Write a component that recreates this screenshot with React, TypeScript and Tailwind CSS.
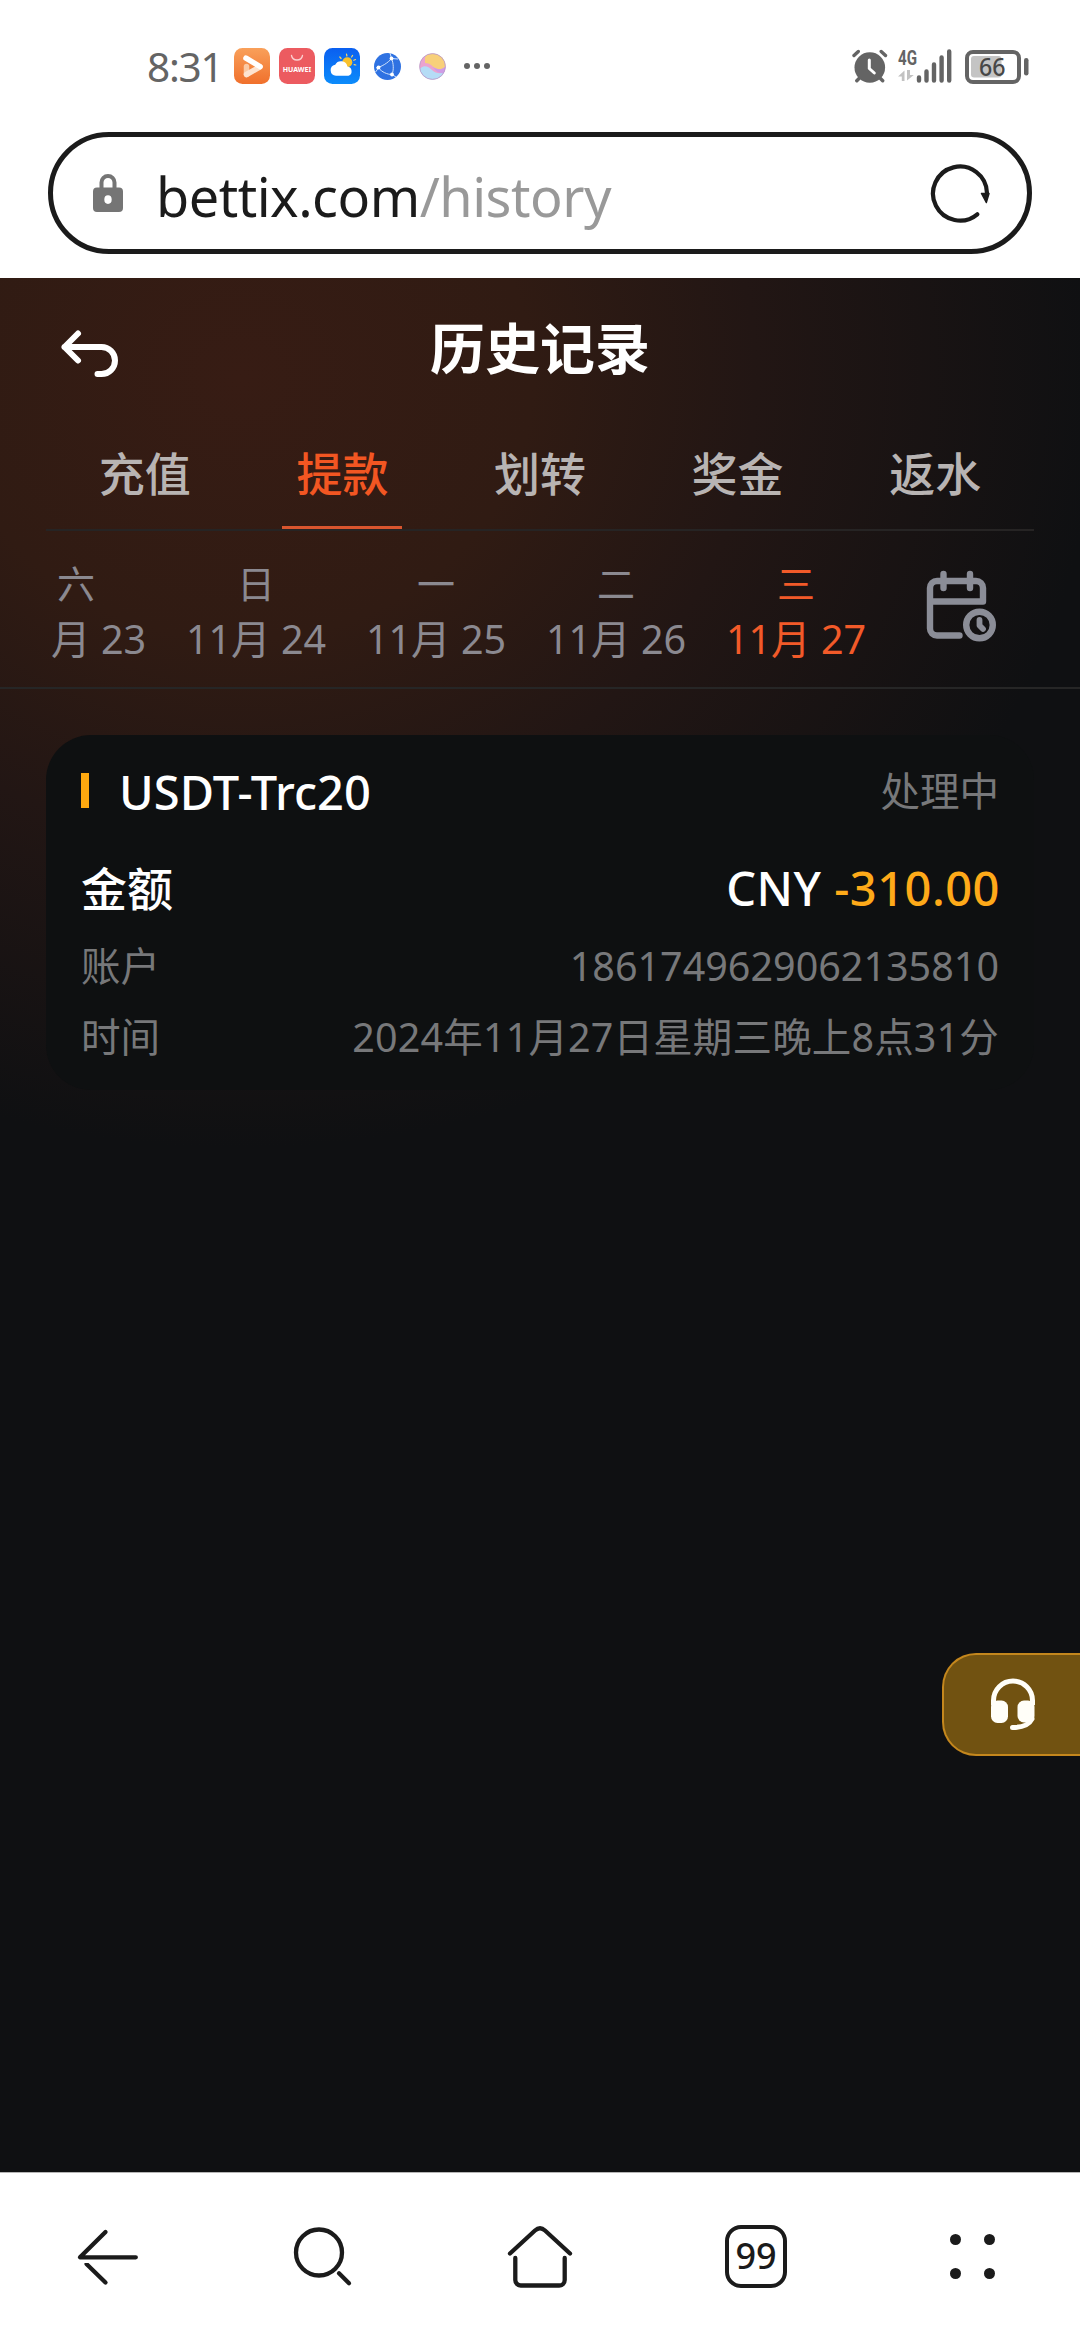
/**
 * Bettix history page - withdrawal records inside the mobile browser
 */

import React from 'react';
import { clsx } from 'clsx';

// ============================================
// Types
// ============================================
interface DayItem {
  weekday: string;
  date: string;
}

interface RecordItem {
  method: string;
  status: string;
  currency: string;
  amount: string;
  account: string;
  time: string;
}

// ============================================
// Data
// ============================================
const tabs = ['充值', '提款', '划转', '奖金', '返水'];
const activeTab = '提款';

const days: DayItem[] = [
  { weekday: '六', date: '11月 23' },
  { weekday: '日', date: '11月 24' },
  { weekday: '一', date: '11月 25' },
  { weekday: '二', date: '11月 26' },
  { weekday: '三', date: '11月 27' },
];
const activeDate = '11月 27';

const record: RecordItem = {
  method: 'USDT-Trc20',
  status: '处理中',
  currency: 'CNY',
  amount: '-310.00',
  account: '1861749629062135810',
  time: '2024年11月27日星期三晚上8点31分',
};

// ============================================
// Status bar icons
// ============================================
const VideoAppIcon = () => (
  <svg className="size-9" viewBox="0 0 36 36">
    <defs>
      <linearGradient id="video-bg" x1="0" y1="0" x2="0" y2="1">
        <stop offset="0" stopColor="#f9a05a" />
        <stop offset="1" stopColor="#f0702c" />
      </linearGradient>
    </defs>
    <rect width="36" height="36" rx="8.5" fill="url(#video-bg)" />
    <path d="M12.5 18.5v8" stroke="#fbc9a4" strokeWidth="5.5" strokeLinecap="round" />
    <path d="M12.5 26.5L26 18.8" stroke="#fde3d0" strokeWidth="5.5" strokeLinecap="round" />
    <path d="M12 10.2L26 18.5" stroke="#fff" strokeWidth="5.5" strokeLinecap="round" />
  </svg>
);

const HuaweiAppIcon = () => (
  <svg className="size-9" viewBox="0 0 36 36">
    <rect width="36" height="36" rx="8.5" fill="#ec5b60" />
    <path d="M12.5 7.5c1.2 6 9.8 6 11 0" fill="none" stroke="#fbd0d0" strokeWidth="1.3" strokeLinecap="round" />
    <text
      x="18"
      y="23.5"
      textAnchor="middle"
      textLength="28.5"
      lengthAdjust="spacingAndGlyphs"
      fontSize="6.8"
      fontWeight="700"
      fontFamily="Noto Sans, sans-serif"
      fill="#fff"
    >
      HUAWEI
    </text>
  </svg>
);

const WeatherAppIcon = () => (
  <svg className="size-9" viewBox="0 0 36 36">
    <defs>
      <linearGradient id="weather-bg" x1="0" y1="0" x2="0" y2="1">
        <stop offset="0" stopColor="#0a5ff0" />
        <stop offset="1" stopColor="#0c8cfb" />
      </linearGradient>
    </defs>
    <rect width="36" height="36" rx="8.5" fill="url(#weather-bg)" />
    <path
      d="M22.5 6.2l.4 1.8M28.6 7.4l-1 1.6M15.8 9l1.3 1.5M31.5 11.500l-1.7.8M31.8 17l-1.7-.4"
      stroke="#f5d668"
      strokeWidth="1.2"
      strokeLinecap="round"
    />
    <circle cx="23.3" cy="14.3" r="5" fill="#f8c12c" />
    <path
      d="M12 27.8a5.6 5.6 0 0 1-.8-11.1 6.6 6.6 0 0 1 12.2 1.7 4.9 4.9 0 0 1 1.100 9.4z"
      fill="#fff"
    />
  </svg>
);

const GlobeIcon = () => (
  <svg className="size-[27px]" viewBox="0 0 27 27">
    <circle cx="13.5" cy="13.5" r="13.5" fill="#2f72e2" />
    <path
      d="M2 15C7 14 14 10 17.5 5.5M17.5 5.5C19.5 10 20 17 18 21.5M4.5 15C8 19 13 21.5 18 21.5M17.5 5.5L16 0M4.5 15L1.5 19M18 21.5L22 24M17.5 5.5L24 6"
      fill="none"
      stroke="#cfe2fb"
      strokeWidth="1"
    />
    <circle cx="17.5" cy="5.5" r="1.9" fill="#fff" />
    <circle cx="4.5" cy="14.5" r="1.9" fill="#fff" />
    <circle cx="18" cy="21.5" r="1.9" fill="#fff" />
  </svg>
);

const GalleryBallIcon = () => (
  <svg className="size-[27px]" viewBox="0 0 27 27">
    <defs>
      <clipPath id="ball">
        <circle cx="13.5" cy="13.5" r="13" />
      </clipPath>
    </defs>
    <g clipPath="url(#ball)">
      <rect width="27" height="27" fill="#eba3cf" />
      <path d="M6 4C10-2 27-1 27 10c0 6-6 8-11 5-3-2-5-5-10-5z" fill="#f8d07a" />
      <path d="M0 17C4 11 9 13 13 17s9 4 14 2v8H0z" fill="#b5dcf6" />
      <path d="M14 14c5 3 9 3 13-1v7c-6 1-10-1-13-6z" fill="#cf9be6" />
    </g>
    <circle cx="13.5" cy="13.5" r="12.9" fill="none" stroke="#b59ac8" strokeWidth=".8" />
  </svg>
);

const AlarmIcon = () => (
  <svg className="size-9" viewBox="0 0 36 36">
    <path
      d="M2 7.5L6.3 3.5M33.500 7.5L29.2 3.5M8 29.5L4.8 32.8M27.5 29.5l3.2 3.3"
      stroke="#646464"
      strokeWidth="3.4"
      strokeLinecap="round"
    />
    <circle cx="17.8" cy="19.5" r="15.3" fill="#646464" />
    <path d="M17.3 12v8.5l5 4.5" fill="none" stroke="#fff" strokeWidth="3" strokeLinecap="round" strokeLinejoin="round" />
  </svg>
);

const SignalIcon = () => (
  <svg className="h-9 w-[55px] overflow-visible" viewBox="0 0 55 36">
    <text
      x="0"
      y="16.5"
      textLength="19"
      lengthAdjust="spacingAndGlyphs"
      fontSize="20.5"
      fontWeight="700"
      fontFamily="Roboto, sans-serif"
      fill="#646464"
    >
      4G
    </text>
    <path d="M6.5 33V22.5L0 28.5h3.8V33zM9 22v10.5l6.8-5.5H12v-5z" fill="#c2c2c2" />
    <path
      d="M21 29.5v3M28.5 23.5v9M36 16.5v16M43.6 9.5v23M51.2 3.5v29"
      stroke="#646464"
      strokeWidth="4.4"
      strokeLinecap="round"
    />
  </svg>
);

const BatteryIcon = () => (
  <svg className="h-9 w-16" viewBox="0 0 64 36">
    <rect x="2" y="4" width="52" height="30" rx="6" fill="none" stroke="#646464" strokeWidth="4" />
    <rect x="6" y="8" width="30.5" height="21.5" rx="3" fill="#c4c4c4" />
    <rect x="59" y="10" width="4.5" height="17.5" rx="2.2" fill="#646464" />
    <text
      x="14"
      y="28"
      textLength="26.5"
      lengthAdjust="spacingAndGlyphs"
      fontSize="25"
      fontWeight="500"
      fontFamily="Noto Sans, sans-serif"
      fill="#474747"
    >
      66
    </text>
  </svg>
);

const StatusBar = () => (
  <div className="flex h-[132px] items-center pl-[147px] pr-[51px]">
    <span className="w-[87px] pt-0.5 text-[40.5px] leading-none tracking-[-1.2px] text-[#646464]">8:31</span>
    <div className="flex items-center">
      <VideoAppIcon />
      <span className="ml-[9px]">
        <HuaweiAppIcon />
      </span>
      <span className="ml-[9px]">
        <WeatherAppIcon />
      </span>
      <span className="ml-3.5">
        <GlobeIcon />
      </span>
      <span className="ml-[18px]">
        <GalleryBallIcon />
      </span>
      <div className="ml-[18px] flex gap-1">
        <i className="size-1.5 rounded-full bg-[#646464]" />
        <i className="size-1.5 rounded-full bg-[#646464]" />
        <i className="size-1.5 rounded-full bg-[#646464]" />
      </div>
    </div>
    <div className="ml-auto flex items-center">
      <AlarmIcon />
      <span className="ml-2.5">
        <SignalIcon />
      </span>
      <span className="ml-3">
        <BatteryIcon />
      </span>
    </div>
  </div>
);

// ============================================
// Address bar
// ============================================
const AddressBar = () => (
  <div className="mx-12 flex h-[122px] items-center rounded-full border-[5px] border-[#1b1b1b] pl-[39px] pr-9">
    <svg className="h-10 w-8" viewBox="0 0 32 40">
      <path d="M9.5 16V9.5a6.5 6.5 0 0 1 13 0V16" fill="none" stroke="#757575" strokeWidth="4" />
      <path
        fillRule="evenodd"
        fill="#757575"
        d="M5 14.5h22a4 4 0 0 1 4 4V35a4 4 0 0 1-4 4H5a4 4 0 0 1-4-4V18.5a4 4 0 0 1 4-4zM16 22.3a3.7 4.3 0 1 0 0 8.6 3.7 4.3 0 0 0 0-8.6z"
      />
    </svg>
    <span className="ml-8 pt-1.5 text-[54px] leading-none tracking-[-0.5px] text-[#1b1b1b]">
      bettix.com<span className="text-[#999]">/history</span>
    </span>
    <svg className="ml-auto size-[62px]" viewBox="0 0 62 62">
      <path d="M48.3 52.3A27 27 0 1 1 58 31" fill="none" stroke="#1b1b1b" strokeWidth="4.2" strokeLinecap="round" />
      <path d="M52.5 31.5h7.5l-2.700 9z" fill="#1b1b1b" stroke="#1b1b1b" strokeWidth="1.5" strokeLinejoin="round" />
    </svg>
  </div>
);

// ============================================
// Page header, tabs and date picker
// ============================================
const PageHeader = () => (
  <header className="grid h-[140px] grid-cols-[1fr_auto_1fr] items-center">
    <svg className="ml-[58px] mt-3 h-[54px] w-16" viewBox="0 0 64 54">
      <path
        d="M20 6.5L6.5 20L20 33.5M6.5 20H43.5a13.5 13.5 0 0 1 0 27H39.5"
        fill="none"
        stroke="#fff"
        strokeWidth="6"
        strokeLinecap="round"
        strokeLinejoin="round"
      />
    </svg>
    <h1 className="pb-0.5 text-[55px] font-bold leading-none text-white">历史记录</h1>
  </header>
);

const TabBar = () => (
  <nav className="mx-[46px] flex h-[113px] border-b-2 border-[#262424]">
    {tabs.map((tab) => (
      <button key={tab} className="flex flex-1 flex-col items-center justify-end">
        <span
          className={clsx(
            'text-[46px] font-medium leading-none',
            tab === activeTab ? 'text-[#f25622]' : 'text-[#b8b4b3]'
          )}
        >
          {tab}
        </span>
        <span className={clsx('mt-[30px] h-[3px] w-[120px]', tab === activeTab && 'bg-[#d9552e]')} />
      </button>
    ))}
  </nav>
);

const CalendarIcon = () => (
  <svg
    className="size-[72px]"
    viewBox="0 0 72 72"
    fill="none"
    stroke="#8b8d97"
    strokeWidth="6.4"
    strokeLinecap="round"
    strokeLinejoin="round"
  >
    <path d="M33.5 65.500H11a7 7 0 0 1-7-7V18a7 7 0 0 1 7-7H50a7 7 0 0 1 7 7V31.500H4M17.5 4v14M44 4v14" />
    <circle cx="53.5" cy="55" r="13.3" />
    <path d="M53.5 50v5.500l3.5 3.5" strokeWidth="5.8" />
  </svg>
);

const DatePicker = () => (
  <div className="flex h-[158px] items-center border-b-2 border-[#262626]">
    <div className="ml-12 w-[838px] overflow-hidden pt-[3px]">
      <div className="-ml-[62px] flex w-[900px]">
        {days.map((day) => (
          <div
            key={day.date}
            className={clsx(
              'flex w-[180px] shrink-0 flex-col items-center text-[39.5px] leading-[56px]',
              day.date === activeDate ? 'text-[#f25a29]' : 'text-[#8b8990]'
            )}
          >
            <span className="text-[38px]">{day.weekday}</span>
            <span className="whitespace-nowrap">{day.date}</span>
          </div>
        ))}
      </div>
    </div>
    <button className="ml-10 pb-1.5">
      <CalendarIcon />
    </button>
  </div>
);

// ============================================
// Record card
// ============================================
const RecordCard: React.FC<{ item: RecordItem }> = ({ item }) => (
  <section className="mx-[46px] mt-[46px] h-[355px] rounded-[45px] bg-[#0e1011] px-[35px] pt-[27px] text-[39.5px] text-[#77787a]">
    <div className="flex h-[60px] items-center justify-between">
      <div className="flex items-center gap-[30px]">
        <i className="mb-1 h-[35px] w-2 bg-[#fea80f]" />
        <span className="text-[47px] font-medium leading-none tracking-[0.1px] text-white">{item.method}</span>
      </div>
      <span className="leading-none">{item.status}</span>
    </div>
    <div className="mt-9 flex h-[60px] items-center justify-between text-[46px] font-medium leading-none text-white">
      <span>金额</span>
      <span className="-mr-px text-[47px] tracking-[0.5px]">
        {item.currency} <span className="text-[#feaa19]">{item.amount}</span>
      </span>
    </div>
    <div className="mt-3.5 flex h-[70px] items-center justify-between leading-none">
      <span>账户</span>
      <span>{item.account}</span>
    </div>
    <div className="flex h-[72px] items-center justify-between leading-none">
      <span>时间</span>
      <span className="tracking-[0.15px]">{item.time}</span>
    </div>
  </section>
);

// ============================================
// Floating support button
// ============================================
const SupportButton = () => (
  <button className="absolute right-0 top-[1375px] flex h-[103px] w-[138px] items-center rounded-l-[34px] border-y-2 border-l-2 border-[#c4871d] bg-[#715211] pl-[45px]">
    <svg className="h-[54px] w-12" viewBox="0 0 48 54">
      <path d="M4.5 27v-4.5a19.5 19.5 0 0 1 39 0V27" fill="none" stroke="#fffef8" strokeWidth="5" />
      <rect x="2" y="22.5" width="17" height="22.5" rx="6.5" fill="#fffef8" />
      <rect x="28.5" y="22.5" width="17" height="22" rx="6.5" fill="#fffef8" />
      <path d="M43 41c-3 6-9 8.500-19.5 8.500" fill="none" stroke="#fffef8" strokeWidth="5" strokeLinecap="round" />
    </svg>
  </button>
);

// ============================================
// Browser toolbar
// ============================================
const BrowserToolbar = () => (
  <footer className="grid h-[168px] grid-cols-5 place-items-center border-t border-[#b5b5b5] bg-white text-[#1b1b1b]">
    <svg
      className="size-[72px]"
      viewBox="0 0 72 72"
      fill="none"
      stroke="currentColor"
      strokeWidth="4.3"
      strokeLinecap="round"
      strokeLinejoin="round"
    >
      <path d="M33.5 11L8 36.300H63.800" />
      <path d="M14.5 43L33.5 61.500" />
      <path d="M10.5 40.500h8" stroke="#fff" strokeWidth="3" strokeLinecap="butt" />
    </svg>
    <svg className="size-[72px]" viewBox="0 0 72 72" fill="none" stroke="currentColor" strokeWidth="4.3" strokeLinecap="round">
      <circle cx="31" cy="31.5" r="23" />
      <path d="M51 52.300l10 10" />
    </svg>
    <svg
      className="size-[72px]"
      viewBox="0 0 72 72"
      fill="none"
      stroke="currentColor"
      strokeWidth="4.3"
      strokeLinecap="round"
      strokeLinejoin="round"
    >
      <path d="M6 32.5L31 9.5Q36 5 41 9.5L66 32.5" />
      <path d="M11.3 37V59a5.5 5.5 0 0 0 5.5 5.5H55.2a5.5 5.5 0 0 0 5.5-5.5V37" />
    </svg>
    <div className="flex h-[63px] w-[62px] items-center justify-center rounded-[16px] border-[4px] border-[#1b1b1b]">
      <span className="pb-px text-[36px] font-medium leading-none">99</span>
    </div>
    <div className="grid grid-cols-2 gap-[23px]">
      <i className="size-[11px] rounded-full bg-[#1b1b1b]" />
      <i className="size-[11px] rounded-full bg-[#1b1b1b]" />
      <i className="size-[11px] rounded-full bg-[#1b1b1b]" />
      <i className="size-[11px] rounded-full bg-[#1b1b1b]" />
    </div>
  </footer>
);

// ============================================
// App
// ============================================
const App: React.FC = () => (
  <div className="flex h-[2340px] w-[1080px] flex-col overflow-hidden bg-white font-['Noto_Sans','Noto_Sans_CJK_SC',sans-serif]">
    <StatusBar />
    <AddressBar />
    <main className="relative mt-6 flex-1 bg-[#0f1012] bg-[radial-gradient(ellipse_860px_770px_at_240px_100px,#371c14_0%,#301b13_34%,#221614_60%,#0f1012_100%)]">
      <PageHeader />
      <TabBar />
      <DatePicker />
      <RecordCard item={record} />
      <SupportButton />
    </main>
    <BrowserToolbar />
  </div>
);

export default App;
